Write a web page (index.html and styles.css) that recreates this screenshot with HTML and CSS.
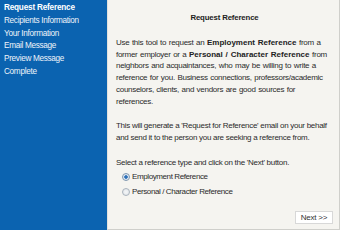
FILE: index.html
```html
<!DOCTYPE html>
<html>
<head>
<meta charset="utf-8">
<link rel="stylesheet" href="styles.css">
</head>
<body>
<div class="page">
  <nav class="sidebar">
    <div class="nav-item active">Request Reference</div>
    <div class="nav-item">Recipients Information</div>
    <div class="nav-item">Your Information</div>
    <div class="nav-item">Email Message</div>
    <div class="nav-item">Preview Message</div>
    <div class="nav-item">Complete</div>
  </nav>
  <main class="content">
    <h1 class="title">Request Reference</h1>
    <p class="para para1">Use this tool to request an <b>Employment Reference</b> from a former employer or a <b>Personal / Character Reference</b> from neighbors and acquaintances, who may be willing to write a reference for you. Business connections, professors/academic counselors, clients, and vendors are good sources for references.</p>
    <p class="para para2">This will generate a 'Request for Reference' email on your behalf and send it to the person you are seeking a reference from.</p>
    <p class="para para3">Select a reference type and click on the 'Next' button.</p>
    <label class="option first"><span class="radio checked"></span>Employment Reference</label>
    <label class="option"><span class="radio"></span>Personal / Character Reference</label>
    <div class="actions"><button class="next">Next &gt;&gt;</button></div>
  </main>
</div>
</body>
</html>
```
FILE: styles.css
```css
html, body {
  margin: 0;
  padding: 0;
  width: 340px;
  height: 230px;
  overflow: hidden;
  font-family: "Liberation Sans", Arial, sans-serif;
}
.page {
  display: flex;
  height: 230px;
}
.sidebar {
  width: 107px;
  flex: none;
  background: #0b63b0;
  padding-top: 2px;
  box-sizing: border-box;
}
.nav-item {
  color: #eef3fa;
  font-size: 8.2px;
  letter-spacing: -0.3px;
  line-height: 12.8px;
  padding-left: 4px;
  white-space: nowrap;
}
.nav-item.active {
  font-weight: bold;
  color: #fff;
  letter-spacing: -0.2px;
}
.content {
  flex: 1;
  background: #f5f4f0;
  border-left: 1px solid #e2e2de;
  border-right: 1px solid #cfcfcb;
  border-bottom: 1px solid #cfcfcb;
  padding: 0 6px 0 8px;
  display: flex;
  flex-direction: column;
  color: #2b2b2b;
  font-size: 8px;
  letter-spacing: -0.28px;
}
.title {
  font-size: 7.8px;
  font-weight: bold;
  text-align: center;
  margin: 12px 0 0 0;
  line-height: 11px;
  color: #222;
  letter-spacing: -0.15px;
}
.para {
  margin: 14px 0 0 0;
  line-height: 11.7px;
}
.para b {
  color: #222;
  letter-spacing: 0;
}
.para1 {
  word-spacing: 0.6px;
}
.para2 {
  margin-top: 13px;
}
.para3 {
  margin-top: 13px;
}
.option {
  display: flex;
  align-items: center;
  margin-left: 6px;
  height: 15px;
  line-height: 15px;
  letter-spacing: -0.4px;
}
.option.first {
  margin-top: 1px;
}
.radio {
  width: 6px;
  height: 6px;
  border-radius: 50%;
  border: 1px solid #a9b3bd;
  background: radial-gradient(circle, #f4f6f8 0, #dfe3e7 100%);
  margin-right: 2px;
  flex: none;
  box-sizing: content-box;
}
.radio.checked {
  background: radial-gradient(circle, #2b6fb8 0, #2b6fb8 35%, #dbe4ee 45%, #eef2f6 100%);
  border-color: #7f97b0;
}
.actions {
  margin-top: auto;
  margin-bottom: 5px;
  display: flex;
  justify-content: flex-end;
  margin-right: 0;
}
.next {
  font-family: "Liberation Sans", Arial, sans-serif;
  font-size: 8px;
  letter-spacing: -0.2px;
  color: #333;
  background: #fff;
  border: 1px solid #d8d8d8;
  height: 13px;
  width: 38px;
  padding: 0;
  line-height: 11px;
}
```
